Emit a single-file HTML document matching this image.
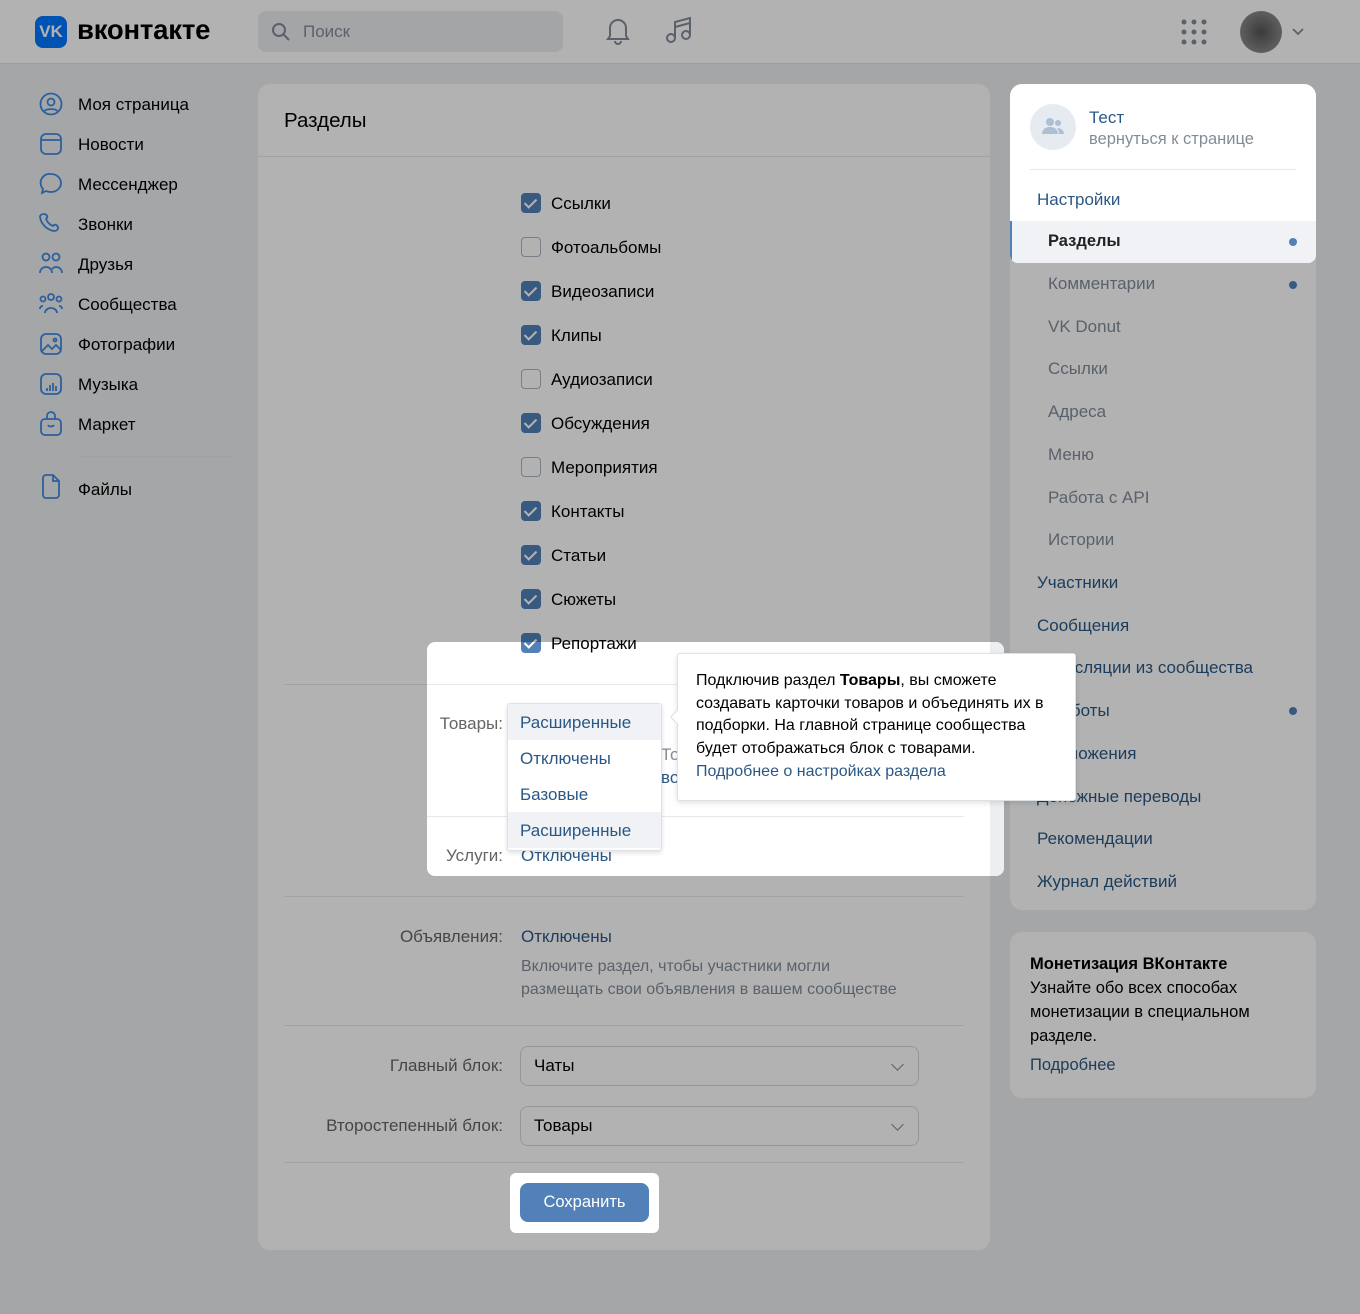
<!DOCTYPE html>
<html><head><meta charset="utf-8"><style>
*{box-sizing:border-box;margin:0;padding:0}
body{width:1360px;height:1314px;background:#edeef0;font-family:"Liberation Sans",sans-serif;font-size:17px;color:#000;position:relative;overflow:hidden}
.a{position:absolute;white-space:nowrap}
.hdr{left:0;top:0;width:1360px;height:64px;background:#fff;border-bottom:1px solid #dce1e6}
.card{background:#fff;border-radius:12px}
.cb{position:absolute;width:20px;height:20px;border-radius:4px;border:1.5px solid #aeb7c2;background:#fff}
.cb.on{background:#5181b8;border-color:#5181b8}
.cb.on:after{content:"";position:absolute;left:5px;top:2px;width:5px;height:10px;border:solid #fff;border-width:0 2.2px 2.2px 0;transform:rotate(45deg)}
.hr{position:absolute;height:1px;background:#e7e8ec}
.lbl{color:#656565;text-align:right}
.blue{color:#2a5885}
.gray{color:#818c99}
.sel{position:absolute;left:520px;width:399px;height:40px;border:1px solid #d3d9de;border-radius:8px;background:#fff;padding:0 13px;line-height:38px}
.sel:after{content:"";position:absolute;right:16px;top:13px;width:8px;height:8px;border:solid #818c99;border-width:0 1.6px 1.6px 0;transform:rotate(45deg)}
.ov{position:absolute;left:0;top:0;width:1360px;height:1314px;background:rgba(0,0,0,.3)}
.hl{position:absolute;background:#fff;overflow:hidden;border-radius:6px}
.in{position:absolute;left:0;top:0;width:1360px;height:1314px}
svg{position:absolute}
</style></head><body>

<div class="a hdr"></div>
<div class="a" style="left:35px;top:16px;width:32px;height:32px;background:#0077ff;border-radius:8px;color:#fff;font-weight:bold;font-size:17px;line-height:32px;text-align:center">VK</div>
<div class="a" style="left:77px;top:14px;font-size:27.5px;font-weight:bold;letter-spacing:-0.2px">вконтакте</div>
<div class="a" style="left:258px;top:11px;width:305px;height:41px;background:#ebedf0;border-radius:8px"></div>
<svg style="left:271px;top:22px" width="20" height="20" viewBox="0 0 20 20" fill="none" stroke="#818c99" stroke-width="2"><circle cx="8" cy="8" r="6"/><path d="M12.5 12.5L18 18"/></svg>
<div class="a gray" style="left:303px;top:22px;font-size:17px">Поиск</div>
<svg style="left:604px;top:15px" width="28" height="30" viewBox="0 0 28 30" fill="none" stroke="#818c99" stroke-width="2"><path d="M6 21V13a8 8 0 0116 0v8l2 3H4z"/><path d="M11 26a3 3 0 006 0"/></svg>
<svg style="left:664px;top:15px" width="30" height="30" viewBox="0 0 30 30" fill="none" stroke="#818c99" stroke-width="2"><path d="M11 23V7l15-4v16"/><circle cx="7" cy="23" r="4"/><circle cx="22" cy="20" r="4"/><path d="M11 12l15-4"/></svg>
<svg style="left:1181px;top:19px" width="26" height="26" viewBox="0 0 26 26" fill="#818c99"><circle cx="3" cy="3" r="2.5"/><circle cx="13" cy="3" r="2.5"/><circle cx="23" cy="3" r="2.5"/><circle cx="3" cy="13" r="2.5"/><circle cx="13" cy="13" r="2.5"/><circle cx="23" cy="13" r="2.5"/><circle cx="3" cy="23" r="2.5"/><circle cx="13" cy="23" r="2.5"/><circle cx="23" cy="23" r="2.5"/></svg>
<div class="a" style="left:1240px;top:11px;width:42px;height:42px;border-radius:50%;background:radial-gradient(#555,#888 70%,#bbb)"></div>
<svg style="left:1292px;top:28px" width="12" height="8" viewBox="0 0 12 8" fill="none" stroke="#818c99" stroke-width="1.8"><path d="M1 1l5 5 5-5"/></svg>

<svg style="left:39px;top:92px" width="24" height="410" viewBox="0 0 24 410" fill="none" stroke="#3f8ae0" stroke-width="1.8">
<circle cx="12" cy="12" r="10.5"/><circle cx="12" cy="10" r="3.5"/><path d="M5.5 19c2-2.5 11-2.5 13 0"/>
<rect x="2" y="42" width="20" height="20" rx="5"/><path d="M2 48h20"/>
<path d="M12 82a10 9 0 110 18c-2 0-4-.5-5-1l-4 2 1-4a9 9 0 018-15z"/>
<path d="M5 122c2 0 4 2 3 4l-1 1c1 3 4 6 7 7l1-1c2-1 4 1 4 3 0 2-2 3-4 3-7-1-13-7-14-14 0-2 2-3 4-3z"/>
<circle cx="7" cy="165" r="3.5"/><circle cx="17" cy="165" r="3.5"/><path d="M1 181c0-4 3-6 6-6s6 2 6 6M13 177c1-1 2-2 4-2 3 0 6 2 6 6"/>
<circle cx="12" cy="205" r="3"/><circle cx="4" cy="207" r="2.5"/><circle cx="20" cy="207" r="2.5"/><path d="M6 221c0-3 3-5 6-5s6 2 6 5M1 217c0-2 1-3 3-3M23 217c0-2-1-3-3-3"/>
<rect x="2" y="242" width="20" height="20" rx="5"/><path d="M3 259l6-6 4 4 4-4 5 5"/><circle cx="16" cy="248" r="1.5"/>
<rect x="2" y="282" width="20" height="20" rx="5"/><path d="M8 296v3M11 293v6M14 291v8M17 294v5"/>
<rect x="2" y="327" width="20" height="16" rx="4"/><path d="M8 327v-3a4 4 0 018 0v3M9 333c1 2 5 2 6 0"/>
<path d="M4 386a3 3 0 013-3h7l6 6v14a3 3 0 01-3 3H7a3 3 0 01-3-3z"/><path d="M14 383v6h6"/>
</svg>
<div class="a" style="left:78px;top:95px">Моя страница</div>
<div class="a" style="left:78px;top:135px">Новости</div>
<div class="a" style="left:78px;top:175px">Мессенджер</div>
<div class="a" style="left:78px;top:215px">Звонки</div>
<div class="a" style="left:78px;top:255px">Друзья</div>
<div class="a" style="left:78px;top:295px">Сообщества</div>
<div class="a" style="left:78px;top:335px">Фотографии</div>
<div class="a" style="left:78px;top:375px">Музыка</div>
<div class="a" style="left:78px;top:415px">Маркет</div>
<div class="hr" style="left:78px;top:456px;width:157px"></div>
<div class="a" style="left:78px;top:480px">Файлы</div>

<div class="a card" style="left:258px;top:84px;width:732px;height:1166px"></div>
<div class="a" style="left:284px;top:109px;font-size:20.5px">Разделы</div>
<div class="hr" style="left:258px;top:156px;width:732px"></div>
<div class="cb on" style="left:521px;top:193px"></div><div class="a" style="left:551px;top:194px">Ссылки</div>
<div class="cb" style="left:521px;top:237px"></div><div class="a" style="left:551px;top:238px">Фотоальбомы</div>
<div class="cb on" style="left:521px;top:281px"></div><div class="a" style="left:551px;top:282px">Видеозаписи</div>
<div class="cb on" style="left:521px;top:325px"></div><div class="a" style="left:551px;top:326px">Клипы</div>
<div class="cb" style="left:521px;top:369px"></div><div class="a" style="left:551px;top:370px">Аудиозаписи</div>
<div class="cb on" style="left:521px;top:413px"></div><div class="a" style="left:551px;top:414px">Обсуждения</div>
<div class="cb" style="left:521px;top:457px"></div><div class="a" style="left:551px;top:458px">Мероприятия</div>
<div class="cb on" style="left:521px;top:501px"></div><div class="a" style="left:551px;top:502px">Контакты</div>
<div class="cb on" style="left:521px;top:545px"></div><div class="a" style="left:551px;top:546px">Статьи</div>
<div class="cb on" style="left:521px;top:589px"></div><div class="a" style="left:551px;top:590px">Сюжеты</div>
<div class="cb on" style="left:521px;top:633px"></div><div class="a" style="left:551px;top:634px">Репортажи</div>
<div class="hr" style="left:284px;top:684px;width:680px"></div>
<div class="hr" style="left:284px;top:896px;width:680px"></div>
<div class="a lbl" style="left:300px;top:927px;width:203px">Объявления:</div>
<div class="a blue" style="left:521px;top:927px">Отключены</div>
<div class="a gray" style="left:521px;top:955px;font-size:16px;line-height:23px">Включите раздел, чтобы участники могли<br>размещать свои объявления в вашем сообществе</div>
<div class="hr" style="left:284px;top:1025px;width:680px"></div>
<div class="a lbl" style="left:280px;top:1056px;width:223px">Главный блок:</div>
<div class="sel" style="top:1046px">Чаты</div>
<div class="a lbl" style="left:280px;top:1116px;width:223px">Второстепенный блок:</div>
<div class="sel" style="top:1106px">Товары</div>
<div class="hr" style="left:284px;top:1162px;width:680px"></div>

<div class="a card" style="left:1010px;top:84px;width:306px;height:826px"></div>
<div class="a card" style="left:1010px;top:932px;width:306px;height:166px"></div>
<div class="a" style="left:1030px;top:952px;width:280px;font-size:16.5px;line-height:24px;white-space:normal"><b>Монетизация ВКонтакте</b><br>Узнайте обо всех способах монетизации в специальном разделе.<br><span class="blue" style="line-height:34px">Подробнее</span></div>
<div class="a gray" style="left:1048px;top:263px;line-height:42.7px">Комментарии<br>VK Donut<br>Ссылки<br>Адреса<br>Меню<br>Работа с API<br>Истории</div>
<div class="a blue" style="left:1037px;top:562px;line-height:42.7px">Участники<br>Сообщения<br>Трансляции из сообщества<br>Чат-боты<br>Приложения<br>Денежные переводы<br>Рекомендации<br>Журнал действий</div>
<div class="a" style="left:1289px;top:281px;width:8px;height:8px;border-radius:50%;background:#5181b8"></div>
<div class="a" style="left:1289px;top:707px;width:8px;height:8px;border-radius:50%;background:#5181b8"></div>

<div class="ov"></div>

<div class="hl" style="left:1010px;top:84px;width:306px;height:179px;border-radius:12px 12px 8px 8px">
 <div class="a" style="left:20px;top:20px;width:46px;height:46px;border-radius:50%;background:#e5ebf1"></div>
 <svg style="left:32px;top:33px" width="22" height="18" viewBox="0 0 22 18" fill="#aebfd3"><circle cx="8" cy="5" r="4"/><circle cx="16" cy="6" r="3"/><path d="M0 17c0-5 4-7 8-7s8 2 8 7zM15 11c4 0 7 2 7 6h-5c0-3-1-5-2-6z"/></svg>
 <div class="a blue" style="left:79px;top:24px">Тест</div>
 <div class="a gray" style="left:79px;top:46px;font-size:16.5px">вернуться к странице</div>
 <div class="hr" style="left:20px;top:85px;width:266px"></div>
 <div class="a blue" style="left:27px;top:106px">Настройки</div>
 <div class="a" style="left:0;top:137px;width:306px;height:42px;background:#f0f2f5;border-left:2px solid #5181b8"></div>
 <div class="a" style="left:38px;top:148px;font-weight:bold;font-size:16.5px;color:#222">Разделы</div>
 <div class="a" style="left:279px;top:154px;width:8px;height:8px;border-radius:50%;background:#5181b8"></div>
</div>

<div class="hl" style="left:427px;top:642px;width:577px;height:234px;border-radius:8px">
 <div class="in" style="left:-427px;top:-642px">
  <div class="a" style="left:990px;top:0;width:30px;height:1314px;background:#edeef0"></div>
  <div class="cb on" style="left:521px;top:633px"></div><div class="a" style="left:551px;top:634px">Репортажи</div>
  <div class="hr" style="left:284px;top:684px;width:680px"></div>
  <div class="a lbl" style="left:300px;top:714px;width:203px">Товары:</div>
  <div class="a gray" style="left:661px;top:743px;line-height:23px">Товары<br><span class="blue">во</span></div>
  <div class="hr" style="left:284px;top:816px;width:680px"></div>
  <div class="a lbl" style="left:300px;top:846px;width:203px">Услуги:</div>
  <div class="a blue" style="left:521px;top:846px">Отключены</div>
  <div class="a" style="left:507px;top:703px;width:155px;height:148px;background:#fff;border:1px solid #dce1e6;border-radius:3px;box-shadow:0 2px 5px rgba(0,0,0,.12)">
   <div class="blue" style="height:36px;line-height:38px;padding-left:12px;background:#f0f2f5">Расширенные</div>
   <div class="blue" style="height:36px;line-height:38px;padding-left:12px">Отключены</div>
   <div class="blue" style="height:36px;line-height:38px;padding-left:12px">Базовые</div>
   <div class="blue" style="height:36px;line-height:38px;padding-left:12px;background:#f0f2f5">Расширенные</div>
  </div>
 </div>
</div>

<div class="a" style="left:677px;top:653px;width:399px;height:148px;background:#fff;border:1px solid #dce1e6;border-radius:3px;box-shadow:0 2px 6px rgba(0,0,0,.12);padding:16px 16px 16px 18px;font-size:16px;line-height:22.7px;white-space:normal;color:#000">
 Подключив раздел <b>Товары</b>, вы сможете создавать карточки товаров и объединять их в подборки. На главной странице сообщества будет отображаться блок с товарами.<br><span class="blue">Подробнее о настройках раздела</span>
</div>
<div class="a" style="left:672px;top:712px;width:10px;height:10px;background:#fff;border-left:1px solid #dce1e6;border-bottom:1px solid #dce1e6;transform:rotate(45deg)"></div>

<div class="hl" style="left:510px;top:1173px;width:149px;height:60px;border-radius:6px">
 <div class="a" style="left:10px;top:10px;width:129px;height:39px;background:#5181b8;border-radius:8px;color:#fff;text-align:center;line-height:39px;font-size:16.5px">Сохранить</div>
</div>
</body></html>
